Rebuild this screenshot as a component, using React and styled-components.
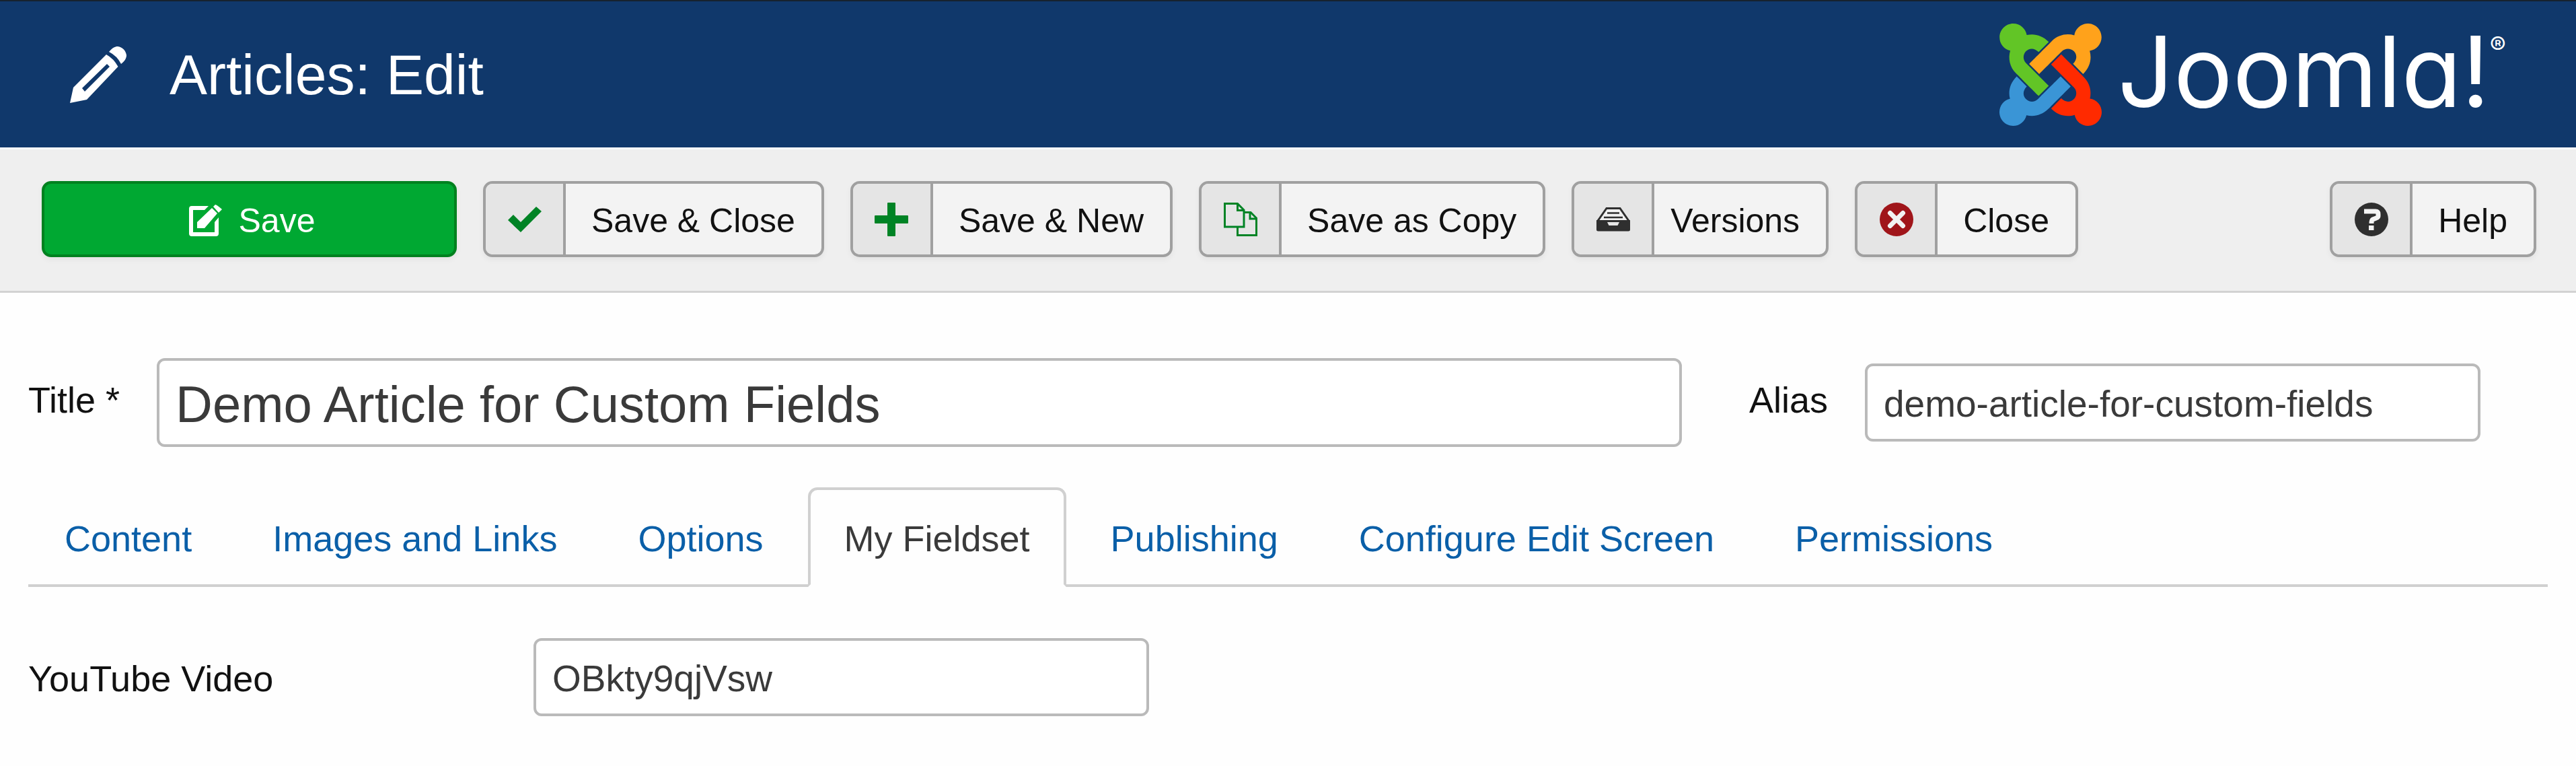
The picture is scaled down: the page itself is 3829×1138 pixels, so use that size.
import React from "react";
import styled, { createGlobalStyle } from "styled-components";

const GlobalStyle = createGlobalStyle`
  *, *::before, *::after { box-sizing: border-box; }
  body {
    margin: 0;
    background: #fefefe;
    color: #111;
    font-family: "Liberation Sans", Arial, sans-serif;
    font-size: 54px;
  }
  svg { display: block; flex: none; }
`;

const Header = styled.header`
  display: flex;
  align-items: center;
  justify-content: space-between;
  height: 219px;
  padding: 0 104px;
  border-top: 2px solid #17222e;
  background: #10386b;
  color: #fff;
`;

const PageTitle = styled.h1`
  display: flex;
  align-items: center;
  gap: 64px;
  margin: 0;
  font-size: 84px;
  font-weight: 400;
  line-height: 96px;
`;

const Brand = styled.a`
  display: flex;
  align-items: center;
  gap: 24px;
  color: #fff;
  text-decoration: none;
`;

const Wordmark = styled.span`
  display: flex;
  align-items: flex-start;
  padding-bottom: 10px;
  font-family: Inter, sans-serif;
  font-feature-settings: "cv11";
  font-size: 146px;
  line-height: 146px;
`;

const Registered = styled.small`
  padding-top: 14px;
  font-size: 36px;
  line-height: 40px;
`;

const Toolbar = styled.div`
  display: flex;
  gap: 39px;
  padding: 47px 59px 50px 62px;
  border-top: 3px solid #fbfbfb;
  border-bottom: 3px solid #d2d2d2;
  background: #efefef;
`;

const ToolButton = styled.button`
  display: flex;
  align-items: stretch;
  height: 113px;
  padding: 0;
  overflow: hidden;
  border: 4px solid #a0a0a0;
  border-radius: 14px;
  background: #f3f3f3;
  box-shadow: 0 4px 8px rgba(0, 0, 0, 0.05);
  color: #111;
  font: inherit;
  font-size: 50px;
  white-space: nowrap;
  margin-left: ${(p) => (p.$end ? "auto" : "0")};
`;

const PrimaryButton = styled(ToolButton)`
  align-items: center;
  justify-content: center;
  gap: 24px;
  width: 617px;
  padding: 4px 0 0 8px;
  border-color: #00811f;
  background: #00a832;
  color: #fff;
`;

const ButtonIcon = styled.span`
  display: flex;
  align-items: center;
  justify-content: center;
  width: 119px;
  border-right: 4px solid #a0a0a0;
  background: #e5e5e5;
  color: ${(p) => p.$color};
`;

const ButtonText = styled.span`
  display: flex;
  align-items: center;
  padding: 4px 39px 0 ${(p) => (p.$tight ? "24px" : "38px")};
`;

const Main = styled.main`
  padding: 97px 42px 74px;
`;

const TitleRow = styled.div`
  display: flex;
  align-items: center;
  gap: 100px;
  padding-right: 100px;
`;

const Field = styled.div`
  display: flex;
  align-items: center;
  gap: 55px;
  flex: ${(p) => (p.$grow ? "1" : "none")};
`;

const Label = styled.label`
  padding-bottom: 8px;
  line-height: 64px;
  white-space: nowrap;
`;

const WideLabel = styled(Label)`
  width: 751px;
  padding: 4px 0 0;
`;

const TextInput = styled.input`
  width: 915px;
  height: 116px;
  padding: 4px 24px 0;
  border: 4px solid #bababa;
  border-radius: 12px;
  background: #fff;
  color: #3a3a3a;
  font: inherit;
  font-size: 55px;
`;

const TitleInput = styled(TextInput)`
  flex: 1;
  width: auto;
  min-width: 0;
  height: 132px;
  font-size: 76px;
`;

const Tabs = styled.nav`
  display: flex;
  gap: 12px;
  margin-top: 60px;
  border-bottom: 4px solid #d0d0d0;
`;

const Tab = styled.a`
  display: block;
  height: 148px;
  margin-bottom: -4px;
  padding: 40px 50px 0;
  border: 4px solid ${(p) => (p.$active ? "#d0d0d0" : "transparent")};
  border-bottom-color: ${(p) => (p.$active ? "#fefefe" : "transparent")};
  border-radius: 14px 14px 0 0;
  color: ${(p) => (p.$active ? "#3a3a3a" : "#0a5fa8")};
  line-height: 64px;
  text-decoration: none;
  white-space: nowrap;
`;

const FieldsetRow = styled.div`
  display: flex;
  align-items: center;
  margin-top: 76px;
`;

const PencilIcon = () => (
  <svg width="84" height="84" viewBox="0 0 84 84" fill="currentColor" aria-hidden="true">
    <path
      fillRule="evenodd"
      d="M0 84 5 61 54 12Q65 18 71.500 30L25 79ZM55 26 18 62 22 67 59 30Z"
    />
    <path d="M58 8C63 2 67 0 71 0C78 1 83 6 84 13C84 18 81 22 76 26Q70 14 58 8Z" />
  </svg>
);

const EditIcon = () => (
  <svg width="50" height="48" viewBox="0 0 50 48" fill="currentColor" aria-hidden="true">
    <path d="M29 2 23 8H6V41H38V26L44 19V43Q44 47 40 47H4Q0 47 0 43V6Q0 2 4 2Z" />
    <path d="M34 5 42 13 23 35H12V26Z" />
    <path d="M36 3 39 0Q41 0 49 7L44 12Z" />
  </svg>
);

const CheckIcon = () => (
  <svg width="50" height="38" viewBox="0 0 50 38" fill="currentColor" aria-hidden="true">
    <path d="M0 20 8 12 19 23 42 0 50 7 19 38Z" />
  </svg>
);

const PlusIcon = () => (
  <svg width="50" height="50" viewBox="0 0 50 50" fill="currentColor" aria-hidden="true">
    <path d="M20 0H30Q31 0 31 1V19H49Q50 19 50 20V30Q50 31 49 31H31V49Q31 50 30 50H20Q19 50 19 49V31H1Q0 31 0 30V20Q0 19 1 19H19V1Q19 0 20 0Z" />
  </svg>
);

const CopyIcon = () => (
  <svg width="50" height="50" viewBox="0 0 50 50" fill="none" stroke="currentColor" strokeWidth="3" aria-hidden="true">
    <path d="M1.500 1.500H20.500L30 11V36H1.500Z" />
    <path d="M20.500 1.500V11.500H30" />
    <path d="M30 14.500H40L48.500 23V48.500H20.500V37" />
    <path d="M39 14.500V24H48.500" />
  </svg>
);

const DrawerIcon = () => (
  <svg width="50" height="36" viewBox="0 0 50 36" aria-hidden="true">
    <path d="M2 20 15 1.500H35L48 20" fill="#f0f0f0" stroke="currentColor" strokeWidth="3" />
    <path d="M16 8.500H34M11 15H39" stroke="currentColor" strokeWidth="2.500" />
    <path
      fill="currentColor"
      fillRule="evenodd"
      d="M0 19H50V33Q50 35.500 47.500 35.500H2.500Q0 35.500 0 33ZM16 22 18.500 27H31.500L34 22Z"
    />
  </svg>
);

const CancelIcon = () => (
  <svg width="50" height="50" viewBox="0 0 50 50" aria-hidden="true">
    <circle cx="25" cy="25" r="25" fill="currentColor" />
    <path d="M15.500 15.500 34.500 34.500M34.500 15.500 15.500 34.500" stroke="#f2f2f2" strokeWidth="7" strokeLinecap="round" />
  </svg>
);

const HelpIcon = () => (
  <svg width="50" height="50" viewBox="0 0 50 50" aria-hidden="true">
    <circle cx="25" cy="25" r="25" fill="currentColor" />
    <path d="M14 13H31Q35 13 35 17V20Q35 22 32 23L27 25Q25 26 25 31" fill="none" stroke="#f4f4f4" strokeWidth="7" />
    <path d="M21 34H28.500V41H21Z" fill="#f4f4f4" />
  </svg>
);

const JoomlaMark = () => (
  <svg width="152" height="152" viewBox="0 32 448 448" aria-hidden="true">
    <path
      fill="#62c526"
      d="M.6 92.100C.6 58.800 27.400 32 60.400 32c30 0 54.500 21.900 59.200 50.200 32.600-7.600 67.100.6 96.500 30l-44.300 44.300c-20.500-20.500-42.600-16.300-55.400-3.500-14.300 14.300-14.300 37.900 0 52.200l99.500 99.500-44 44.300c-87.700-87.200-49.700-49.700-99.800-99.700-26.800-26.500-35-64.800-24.800-98.900C20.400 144.600.6 120.700.6 92.100z"
    />
    <path
      fill="#ffa21b"
      d="M130.100 208.500l44.300 44.300c10-10 89.700-89.700 99.700-99.800 14.300-14.300 37.600-14.300 51.900 0 12.800 12.800 17 35-3.500 55.400l44 44.300c31.200-31.200 38.500-67.600 28.900-101.200 29.200-4.100 51.900-29.200 51.900-59.500 0-33.200-26.800-60.100-59.800-60.100-30.300 0-55.400 22.500-59.500 51.600-33.800-9.900-71.700-1.500-98.300 25.100-18.300 19.100-71.100 71.500-99.600 99.900z"
    />
    <path
      fill="#ff2a00"
      d="M396.400 360.700c8.200-32.700-.9-68.500-26.300-93.900-11.800-12.200 5 4.700-99.500-99.700l-44.300 44.300 99.700 99.700c14.300 14.300 14.300 37.600 0 51.900-12.800 12.800-35 17-55.400-3.500l-44 44.300c27.600 30.200 68 38.800 102.700 28 5.500 27.400 29.700 48.100 58.900 48.100 33 0 59.800-26.800 59.800-60.100 0-30.200-22.500-55-51.900-59.100z"
    />
    <path
      fill="#3a95d6"
      d="M312.100 307.600l-44-44.300c-87 86.400-50.400 50.400-99.700 99.800-14.300 14.300-37.600 14.300-51.900 0-13.100-13.400-16.900-35.300 3.200-55.400l-44-44.300c-30.200 30.200-38 65.200-29.500 98.300-26.700 6-46.200 29.900-46.200 58.200C0 453.200 26.800 480 59.800 480c28.600 0 52.500-19.800 58.600-46.700 32.700 8.200 68.500-.6 94.200-26 32.100-32 12.200-12.400 99.500-99.700z"
    />
  </svg>
);

const actions = [
  { label: "Save & Close", Icon: CheckIcon, color: "#008325" },
  { label: "Save & New", Icon: PlusIcon, color: "#008325" },
  { label: "Save as Copy", Icon: CopyIcon, color: "#008325" },
  { label: "Versions", Icon: DrawerIcon, color: "#2f2f2f", tight: true },
  { label: "Close", Icon: CancelIcon, color: "#a0151a" },
  { label: "Help", Icon: HelpIcon, color: "#2f2f2f", end: true },
];

const tabs = [
  "Content",
  "Images and Links",
  "Options",
  "My Fieldset",
  "Publishing",
  "Configure Edit Screen",
  "Permissions",
];

export default function App() {
  return (
    <>
      <GlobalStyle />
      <Header>
        <PageTitle>
          <PencilIcon />
          Articles: Edit
        </PageTitle>
        <Brand href="#home">
          <JoomlaMark />
          <Wordmark>
            Joomla!<Registered>®</Registered>
          </Wordmark>
        </Brand>
      </Header>
      <Toolbar role="toolbar">
        <PrimaryButton type="button">
          <EditIcon />
          Save
        </PrimaryButton>
        {actions.map(({ label, Icon, color, tight, end }) => (
          <ToolButton key={label} type="button" $end={end}>
            <ButtonIcon $color={color}>
              <Icon />
            </ButtonIcon>
            <ButtonText $tight={tight}>{label}</ButtonText>
          </ToolButton>
        ))}
      </Toolbar>
      <Main>
        <TitleRow>
          <Field $grow>
            <Label htmlFor="title">Title *</Label>
            <TitleInput id="title" type="text" defaultValue="Demo Article for Custom Fields" />
          </Field>
          <Field>
            <Label htmlFor="alias">Alias</Label>
            <TextInput id="alias" type="text" defaultValue="demo-article-for-custom-fields" />
          </Field>
        </TitleRow>
        <Tabs>
          {tabs.map((name) => (
            <Tab
              key={name}
              href={"#" + name.toLowerCase().replaceAll(" ", "-")}
              $active={name === "My Fieldset"}
              aria-current={name === "My Fieldset" ? "page" : undefined}
            >
              {name}
            </Tab>
          ))}
        </Tabs>
        <FieldsetRow>
          <WideLabel htmlFor="youtube">YouTube Video</WideLabel>
          <TextInput id="youtube" type="text" defaultValue="OBkty9qjVsw" />
        </FieldsetRow>
      </Main>
    </>
  );
}
